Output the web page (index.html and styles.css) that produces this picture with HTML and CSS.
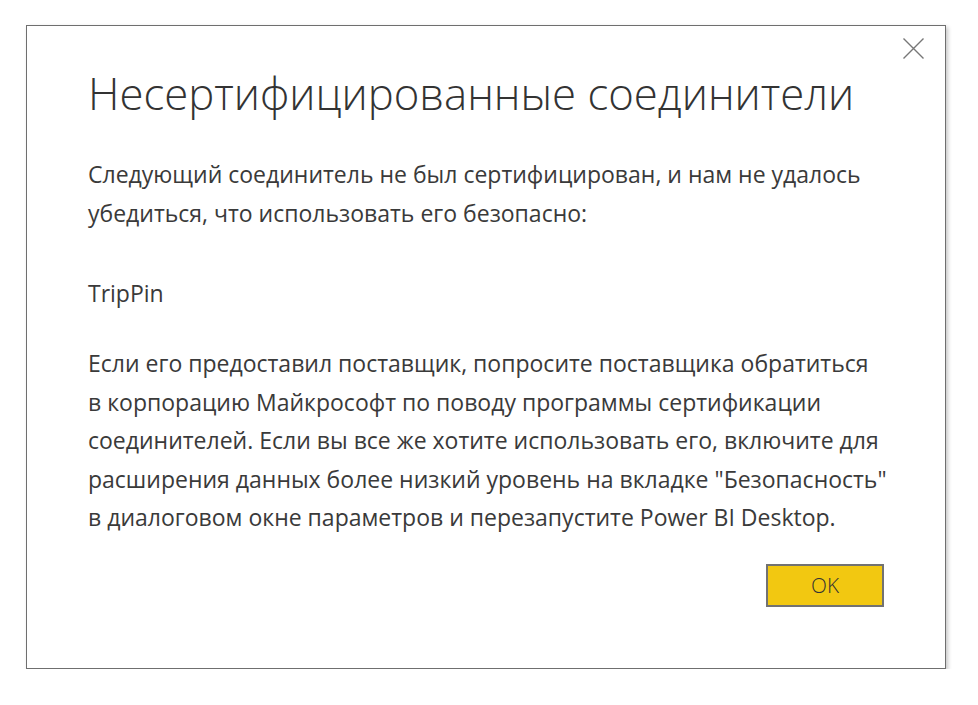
FILE: index.html
```html
<!DOCTYPE html>
<html lang="ru">
<head>
<meta charset="utf-8">
<title>Несертифицированные соединители</title>
<link rel="stylesheet" href="styles.css">
</head>
<body>
<div class="dialog">
  <button class="close" aria-label="Закрыть">
    <svg width="21" height="21" viewBox="0 0 21 21"><path d="M0.5 0.5 L20.5 20.5 M20.5 0.5 L0.5 20.5" stroke="#777" stroke-width="1.4" fill="none"/></svg>
  </button>
  <h1 class="title">Несертифицированные соединители</h1>
  <p class="text intro">Следующий соединитель не был сертифицирован, и нам не удалось<br>убедиться, что использовать его безопасно:</p>
  <p class="text name">TripPin</p>
  <p class="text info">Если его предоставил поставщик, попросите поставщика обратиться<br>в корпорацию Майкрософт по поводу программы сертификации<br>соединителей. Если вы все же хотите использовать его, включите для<br>расширения данных более низкий уровень на вкладке "Безопасность"<br>в диалоговом окне параметров и перезапустите Power BI Desktop.</p>
  <div class="actions">
    <button class="ok">OK</button>
  </div>
</div>
</body>
</html>
```
FILE: styles.css
```css
html, body {
  margin: 0;
  background: #ffffff;
}
body {
  padding: 25px 0 0 26px;
  font-family: "Open Sans", "Noto Sans", sans-serif;
  color: #3a3a3a;
}
.dialog {
  position: relative;
  box-sizing: border-box;
  width: 920px;
  height: 644px;
  border: 1px solid #6f6f6f;
  background: #ffffff;
  box-shadow: 2px 2px 4px rgba(0, 0, 0, 0.22);
  padding: 41px 61px 0 61px;
  display: flex;
  flex-direction: column;
}
.close {
  position: absolute;
  top: 12px;
  right: 21px;
  width: 21px;
  height: 21px;
  padding: 0;
  border: 0;
  background: transparent;
  display: flex;
}
.title {
  margin: 0;
  font-weight: 300;
  font-size: 43.7px;
  line-height: 52px;
  color: #333333;
  white-space: nowrap;
}
.text {
  margin: 0;
  font-size: 23px;
  line-height: 38.5px;
  white-space: nowrap;
}
.intro {
  margin-top: 36px;
}
.name {
  margin-top: 41.5px;
}
.info {
  margin-top: 32px;
}
.actions {
  display: flex;
  justify-content: flex-end;
  margin-top: 27px;
}
.ok {
  box-sizing: border-box;
  width: 118px;
  height: 43px;
  border: 2px solid #727272;
  background: #f2c811;
  font-family: "Open Sans", "Noto Sans", sans-serif;
  font-weight: 300;
  font-size: 20.8px;
  color: #333333;
  padding: 0;
}
```
